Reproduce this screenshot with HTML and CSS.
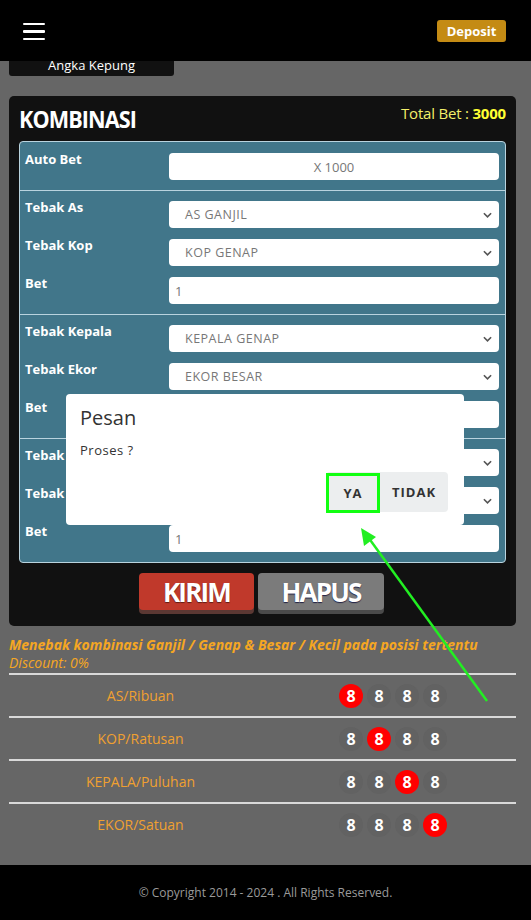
FILE: index.html
```html
<!DOCTYPE html>
<html>
<head>
<meta charset="utf-8">
<link rel="stylesheet" href="styles.css">
</head>
<body>
<header class="topbar">
  <div class="burger"><span></span><span></span><span></span></div>
  <div class="deposit">Deposit</div>
</header>
<div class="tab"><span>Angka Kepung</span></div>

<section class="panel">
  <div class="panel-head">
    <h1 class="title">KOMBINASI</h1>
    <div class="total">Total Bet : <b>3000</b></div>
  </div>
  <div class="formbox">
    <div class="sect first">
      <div class="row"><label>Auto Bet</label><div class="field center">X 1000</div></div>
    </div>
    <div class="sect">
      <div class="row"><label>Tebak As</label><div class="field select">AS GANJIL<svg viewBox="0 0 10 6"><path d="M1 1l4 4 4-4"/></svg></div></div>
      <div class="row"><label>Tebak Kop</label><div class="field select">KOP GENAP<svg viewBox="0 0 10 6"><path d="M1 1l4 4 4-4"/></svg></div></div>
      <div class="row"><label>Bet</label><div class="field num">1</div></div>
    </div>
    <div class="sect">
      <div class="row"><label>Tebak Kepala</label><div class="field select">KEPALA GENAP<svg viewBox="0 0 10 6"><path d="M1 1l4 4 4-4"/></svg></div></div>
      <div class="row"><label>Tebak Ekor</label><div class="field select">EKOR BESAR<svg viewBox="0 0 10 6"><path d="M1 1l4 4 4-4"/></svg></div></div>
      <div class="row"><label>Bet</label><div class="field num">1</div></div>
    </div>
    <div class="sect">
      <div class="row"><label>Tebak Kop</label><div class="field select">KOP GENAP<svg viewBox="0 0 10 6"><path d="M1 1l4 4 4-4"/></svg></div></div>
      <div class="row"><label>Tebak Ekor</label><div class="field select">EKOR BESAR<svg viewBox="0 0 10 6"><path d="M1 1l4 4 4-4"/></svg></div></div>
      <div class="row"><label>Bet</label><div class="field num">1</div></div>
    </div>
  </div>
  <div class="actions">
    <div class="btn red">KIRIM</div>
    <div class="btn gray">HAPUS</div>
  </div>
</section>

<div class="desc">
  <p class="d1">Menebak kombinasi Ganjil / Genap &amp; Besar / Kecil pada posisi tertentu</p>
  <p class="d2">Discount: 0%</p>
</div>

<div class="table">
  <div class="trow"><div class="lbl">AS/Ribuan</div><div class="digits"><span class="on">8</span><span>8</span><span>8</span><span>8</span></div></div>
  <div class="trow"><div class="lbl">KOP/Ratusan</div><div class="digits"><span>8</span><span class="on">8</span><span>8</span><span>8</span></div></div>
  <div class="trow"><div class="lbl">KEPALA/Puluhan</div><div class="digits"><span>8</span><span>8</span><span class="on">8</span><span>8</span></div></div>
  <div class="trow"><div class="lbl">EKOR/Satuan</div><div class="digits"><span>8</span><span>8</span><span>8</span><span class="on">8</span></div></div>
</div>

<footer class="foot">© Copyright 2014 - 2024 . All Rights Reserved.</footer>

<div class="modal">
  <div class="m-title">Pesan</div>
  <div class="m-body">Proses ?</div>
  <div class="m-btns">
    <div class="mbtn ya">YA</div>
    <div class="mbtn">TIDAK</div>
  </div>
</div>

<svg class="arrow" viewBox="0 0 531 920" width="531" height="920">
  <line x1="487" y1="701" x2="368" y2="537" stroke="#22ee22" stroke-width="2.5"/>
  <polygon points="361,528 364,546 376,537" fill="#22ee22"/>
</svg>
</body>
</html>
```

FILE: styles.css
```css
* { box-sizing: border-box; }
html, body { margin: 0; padding: 0; }
body {
  width: 531px;
  background: #666666;
  font-family: "Open Sans", "Noto Sans", sans-serif;
  position: relative;
}
.topbar {
  height: 61px;
  background: #000;
  display: flex;
  align-items: center;
  justify-content: space-between;
  padding: 0 25px 0 23px;
}
.burger { display: flex; flex-direction: column; gap: 5px; width: 22px; margin-top: 2px; }
.burger span { display: block; height: 2.5px; background: #fff; border-radius: 1px; }
.deposit {
  width: 69px; height: 22px;
  background: #c48b14;
  color: #fff;
  font-weight: 700;
  font-size: 13px;
  border-radius: 3px;
  display: flex; align-items: center; justify-content: center;
  margin-top: 1px;
}
.tab {
  margin-left: 9px;
  width: 165px; height: 15px;
  background: #111;
  border-radius: 0 0 3px 3px;
  overflow: hidden;
  text-align: center;
  color: #fff;
  font-size: 13px;
}
.tab span { display: block; line-height: 18px; margin-top: -5px; }
.panel {
  margin: 20px 15px 0 9px;
  background: #111;
  border-radius: 5px;
  padding: 8px 10px 12px 10px;
}
.panel-head { display: flex; justify-content: space-between; align-items: flex-start; height: 37px; }
.title {
  margin: 0;
  color: #fff;
  font-size: 24px;
  font-weight: 700;
  letter-spacing: -1px;
  line-height: 30px;
  transform: scaleX(0.9);
  transform-origin: left center;
}
.total { color: #f3ef6a; font-size: 15px; line-height: 18px; margin-top: 0px; letter-spacing: -0.2px; }
.total b { color: #ffff33; }
.formbox {
  background: #41768a;
  border: 1px solid #b9d3de;
  border-radius: 4px;
}
.sect { padding: 10px 6px 10px 5px; display: flex; flex-direction: column; gap: 11px; }
.sect.first { padding-top: 11px; }
.sect + .sect { border-top: 1px solid #b9d3de; }
.row { display: grid; grid-template-columns: 144px 1fr; }
.row label { color: #fff; font-weight: 700; font-size: 13px; line-height: 16px; margin-top: -2px; }
.field {
  height: 27px;
  background: #fff;
  border-radius: 4px;
  color: #777;
  font-size: 13px;
  display: flex; align-items: center;
  position: relative;
}
.field.center { justify-content: center; }
.field.select { padding-left: 16px; font-size: 12.5px; letter-spacing: 0.5px; }
.field.select svg { position: absolute; right: 7px; top: 11px; width: 9px; height: 6px; fill: none; stroke: #555; stroke-width: 1.8; }
.field.num { padding-left: 6px; }
.actions { display: flex; justify-content: center; gap: 4px; margin-top: 10px; padding-right: 2px; }
.btn {
  height: 37px;
  border-radius: 4px;
  color: #fff;
  font-size: 26px;
  font-weight: 700;
  letter-spacing: -1.8px;
  display: flex; align-items: center; justify-content: center;
  text-shadow: 0 1px 1px rgba(0,0,0,0.5);
  margin-bottom: 4px;
}
.btn.red { width: 115px; background: #c0392b; box-shadow: 0 4px 0 #5b3833; }
.btn.gray { width: 126px; background: #7b7b7b; box-shadow: 0 4px 0 #4a4a4a; text-shadow: 0 1px 1px #224; }
.desc { padding: 9px 9px 0 9px; color: #f5a623; font-style: italic; }
.desc p { margin: 0; }
.d1 { font-weight: 700; font-size: 14px; line-height: 19px; letter-spacing: 0; white-space: nowrap; }
.d2 { font-size: 14px; line-height: 18px; }
.table { margin: 1px 15px 0 9px; padding-bottom: 20px; }
.trow {
  display: grid; grid-template-columns: 263px 1fr;
  height: 43px; align-items: center;
  border-top: 2px solid #d9d9d9;
}
.lbl { text-align: center; color: #f0a030; font-size: 14px; }
.digits { display: flex; gap: 4px; justify-content: center; padding-right: 2px; }
.digits span {
  width: 24px; height: 24px; border-radius: 50%;
  background: #626262;
  color: #fff; font-weight: 700; font-size: 16px;
  display: flex; align-items: center; justify-content: center;
}
.digits span.on { background: #ff0000; }
.foot {
  height: 55px;
  background: #000;
  color: #9a9a9a;
  font-size: 12px;
  display: flex; align-items: center; justify-content: center;
}
.modal {
  position: absolute;
  left: 66px; top: 394px;
  width: 398px; height: 131px;
  background: #fff;
  border-radius: 4px;
  padding: 11px 14px 0 14px;
  color: #333;
}
.m-title { font-size: 20px; line-height: 26px; }
.m-body { font-size: 13px; margin-top: 10px; letter-spacing: 0.5px; }
.m-btns {
  position: absolute; left: 260px; top: 78px;
  display: flex; background: #eceeef; border-radius: 4px; height: 40px;
}
.mbtn {
  font-weight: 700; font-size: 13px; letter-spacing: 1px;
  display: flex; align-items: center; justify-content: center;
  width: 68px; color: #333;
}
.mbtn.ya { width: 54px; border: 3px solid #11ff11; margin-top: 1px; height: 40px; }
.arrow { position: absolute; left: 0; top: 0; pointer-events: none; }
```
